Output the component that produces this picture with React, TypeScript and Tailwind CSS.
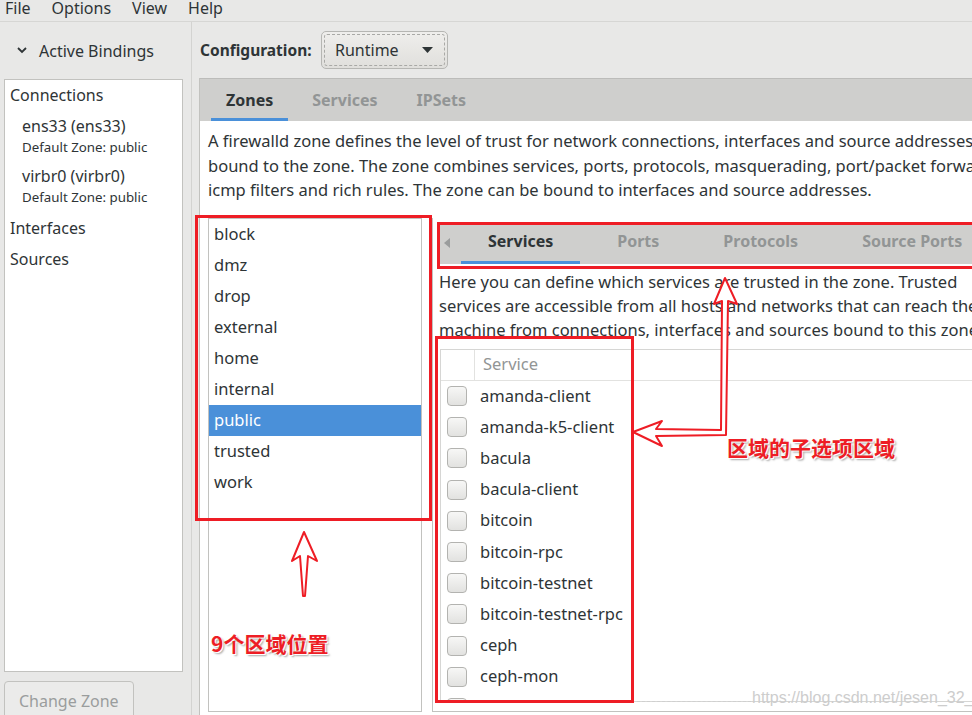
import React from "react";

const zones = ["block", "dmz", "drop", "external", "home", "internal", "public", "trusted", "work"];

const services = [
  "amanda-client",
  "amanda-k5-client",
  "bacula",
  "bacula-client",
  "bitcoin",
  "bitcoin-rpc",
  "bitcoin-testnet",
  "bitcoin-testnet-rpc",
  "ceph",
  "ceph-mon",
  "",
];

function Checkbox() {
  return (
    <span className="block w-[20px] h-[20px] shrink-0 rounded-[4px] border border-[#b3b3b0] bg-gradient-to-b from-[#f7f7f6] to-[#e2e2e0]" />
  );
}

export default function App() {
  return (
    <div className="relative w-[972px] h-[715px] overflow-hidden bg-[#e8e8e7] text-[#2e3436] font-['Noto_Sans',sans-serif] text-[16.5px]">
      {/* menu bar */}
      <div className="h-[22px] flex gap-[21px] px-[5px] border-b border-[#d6d6d4] text-[16px]">
        {["File", "Options", "View", "Help"].map((m) => (
          <span key={m} className="leading-[16px]">
            {m}
          </span>
        ))}
      </div>

      <div className="flex h-[693px]">
        {/* left side: active bindings */}
        <aside className="w-[192px] shrink-0 flex flex-col border-r border-[#d3d3d1] text-[16px]">
          <div className="h-[57px] shrink-0 flex items-center pl-[17px]">
            <svg width="10" height="7" viewBox="0 0 10 7" className="mr-[12px]">
              <polyline points="1,1 5,5 9,1" fill="none" stroke="#2e3436" strokeWidth="1.8" />
            </svg>
            <span>Active Bindings</span>
          </div>
          <div className="ml-[4px] w-[179px] h-[593px] shrink-0 bg-white border border-[#c2c2bf]">
            <div className="h-[30px] flex items-center pl-[5px]">Connections</div>
            <div className="pl-[17px] pt-[6px]">
              <div className="leading-[20px]">ens33 (ens33)</div>
              <div className="leading-[23px] text-[13.3px]">Default Zone: public</div>
            </div>
            <div className="pl-[17px] pt-[7px]">
              <div className="leading-[20px]">virbr0 (virbr0)</div>
              <div className="leading-[23px] text-[13.3px]">Default Zone: public</div>
            </div>
            <div className="mt-[3px] h-[31px] flex items-center pl-[5px]">Interfaces</div>
            <div className="h-[31px] flex items-center pl-[5px]">Sources</div>
          </div>
          <button className="mt-[9px] ml-[4px] w-[130px] h-[44px] shrink-0 pb-[4px] rounded-[4px] border border-[#c2c2bf] bg-[#ebebea] text-[#9a9d9d] text-left pl-[14px]">
            Change Zone
          </button>
        </aside>

        {/* right side */}
        <main className="flex-1 min-w-0 flex flex-col">
          <div className="h-[56px] shrink-0 flex items-center pl-[8px]">
            <span className="w-[121px] font-bold text-[15.5px] pt-[1px]">Configuration:</span>
            <div className="w-[127px] h-[38px] rounded-[5px] border border-[#b6b6b3] bg-gradient-to-b from-[#efeeec] to-[#e0dfdc] p-[2px]">
              <div className="h-full flex items-center justify-between pl-[10px] pr-[11px] border border-dashed border-[#a9a9a6] rounded-[3px] text-[16px]">
                <span>Runtime</span>
                <svg width="11" height="6" viewBox="0 0 11 6">
                  <polygon points="0,0 11,0 5.5,6" fill="#2e3436" />
                </svg>
              </div>
            </div>
          </div>

          {/* outer notebook */}
          <div className="ml-[7px] flex-1 flex flex-col border-l border-[#c2c2bf] min-w-0">
            <div className="h-[43px] shrink-0 flex bg-[#cfcfcd] border-t border-[#bcbcba] pl-[11px] gap-[9px] font-bold text-[16px]">
              <div className="px-[15px] flex items-center border-b-[3px] border-[#4a90d9] pt-[3px]">Zones</div>
              <div className="px-[15px] flex items-center text-[#929595] pt-[3px] border-b-[3px] border-transparent">Services</div>
              <div className="px-[15px] flex items-center text-[#929595] pt-[3px] border-b-[3px] border-transparent">IPSets</div>
            </div>

            <div className="flex-1 bg-white flex flex-col min-w-0">
              <div className="pl-[8px] pt-[8px] leading-[24.5px] whitespace-nowrap">
                <div>A firewalld zone defines the level of trust for network connections, interfaces and source addresses</div>
                <div>bound to the zone. The zone combines services, ports, protocols, masquerading, port/packet forwarding,</div>
                <div>icmp filters and rich rules. The zone can be bound to interfaces and source addresses.</div>
              </div>

              <div className="mt-[15px] flex">
                {/* zone list */}
                <div className="ml-[8px] w-[214px] h-[494px] shrink-0 border border-[#c2c2bf] bg-white">
                  {zones.map((z) => (
                    <div
                      key={z}
                      className={
                        z === "public"
                          ? "h-[31px] flex items-center pl-[5px] bg-[#4a90d9] text-white"
                          : "h-[31px] flex items-center pl-[5px]"
                      }
                    >
                      {z}
                    </div>
                  ))}
                </div>

                {/* inner notebook */}
                <div className="ml-[10px] flex-1 h-[494px] flex flex-col border-l border-b border-[#c2c2bf] min-w-0">
                  <div className="mt-[7px] ml-[5px] h-[39px] shrink-0 flex bg-[#cfcfcd] font-bold text-[16px] whitespace-nowrap">
                    <div className="w-[23px] shrink-0 flex items-center pl-[6px] pb-[3px]">
                      <svg width="6" height="10" viewBox="0 0 6 10">
                        <polygon points="6,0 6,10 0,5" fill="#9a9c9c" />
                      </svg>
                    </div>
                    <div className="flex gap-[10px]">
                      <div className="px-[27px] flex items-center border-b-[3px] border-[#4a90d9] pb-[4px]">Services</div>
                      <div className="px-[27px] flex items-center text-[#929595] border-b-[3px] border-transparent pb-[4px]">Ports</div>
                      <div className="px-[27px] flex items-center text-[#929595] border-b-[3px] border-transparent pb-[4px]">Protocols</div>
                      <div className="px-[27px] flex items-center text-[#929595] border-b-[3px] border-transparent pb-[4px]">Source Ports</div>
                    </div>
                  </div>

                  <div className="pl-[6px] pt-[6px] leading-[24px] whitespace-nowrap">
                    <div>Here you can define which services are trusted in the zone. Trusted</div>
                    <div>services are accessible from all hosts and networks that can reach the</div>
                    <div>machine from connections, interfaces and sources bound to this zone.</div>
                  </div>

                  <div className="mt-[7px] ml-[7px] h-[353px] overflow-hidden border-t border-l border-b border-[#d6d6d4]">
                    <div className="h-[31px] flex border-b border-[#e2e2e0]">
                      <div className="w-[34px] border-r border-[#e2e2e0]" />
                      <div className="pl-[8px] flex items-center text-[#929595]">Service</div>
                    </div>
                    {services.map((s, i) => (
                      <div key={i} className="h-[31.2px] flex items-center">
                        <span className="ml-[6px]">
                          <Checkbox />
                        </span>
                        <span className="ml-[13px]">{s}</span>
                      </div>
                    ))}
                  </div>
                </div>
              </div>
            </div>
          </div>
        </main>
      </div>

      {/* watermark */}
      <div className="absolute left-[637px] top-[701px] w-[114px] border-t border-dashed border-[#cfcfcf]" />
      <div className="absolute left-[752px] top-[686px] text-[16px] text-[#cdcdcd] font-['Liberation_Sans',sans-serif]">
        https://blog.csdn.net/jesen_32_
      </div>

      {/* red annotation boxes */}
      <div className="absolute left-[195px] top-[215px] w-[237px] h-[306px] border-[3px] border-[#ee1d25]" />
      <div className="absolute left-[437px] top-[222px] w-[545px] h-[47px] border-[3px] border-[#ee1d25]" />
      <div className="absolute left-[435px] top-[336px] w-[199px] h-[367px] border-[3px] border-[#ee1d25]" />

      {/* arrows */}
      <svg className="absolute left-0 top-0 pointer-events-none" width="972" height="715" viewBox="0 0 972 715">
        <polygon
          points="304,532 317,561 308,556 305,596 303,596 300,556 292,561"
          fill="white"
          stroke="#ee1d25"
          strokeWidth="2"
          strokeLinejoin="round"
        />
        <polygon
          points="633,432 662,421 656,429 721,430 722,301 714,304 725,278 737,304 728,301 726,435 656,436 662,446"
          fill="white"
          stroke="#ee1d25"
          strokeWidth="2"
          strokeLinejoin="round"
        />
      </svg>

      {/* annotation labels */}
      <div className="absolute left-[211px] top-[629px] text-[21px] leading-[28px] font-bold text-[#ee1d25] font-['Noto_Sans_CJK_SC',sans-serif] [text-shadow:1px_1px_0_#fff,2px_2px_2px_rgba(0,0,0,0.35)]">
        9个区域位置
      </div>
      <div className="absolute left-[727px] top-[433px] text-[21px] leading-[28px] font-bold text-[#ee1d25] font-['Noto_Sans_CJK_SC',sans-serif] [text-shadow:1px_1px_0_#fff,2px_2px_2px_rgba(0,0,0,0.35)]">
        区域的子选项区域
      </div>
    </div>
  );
}
